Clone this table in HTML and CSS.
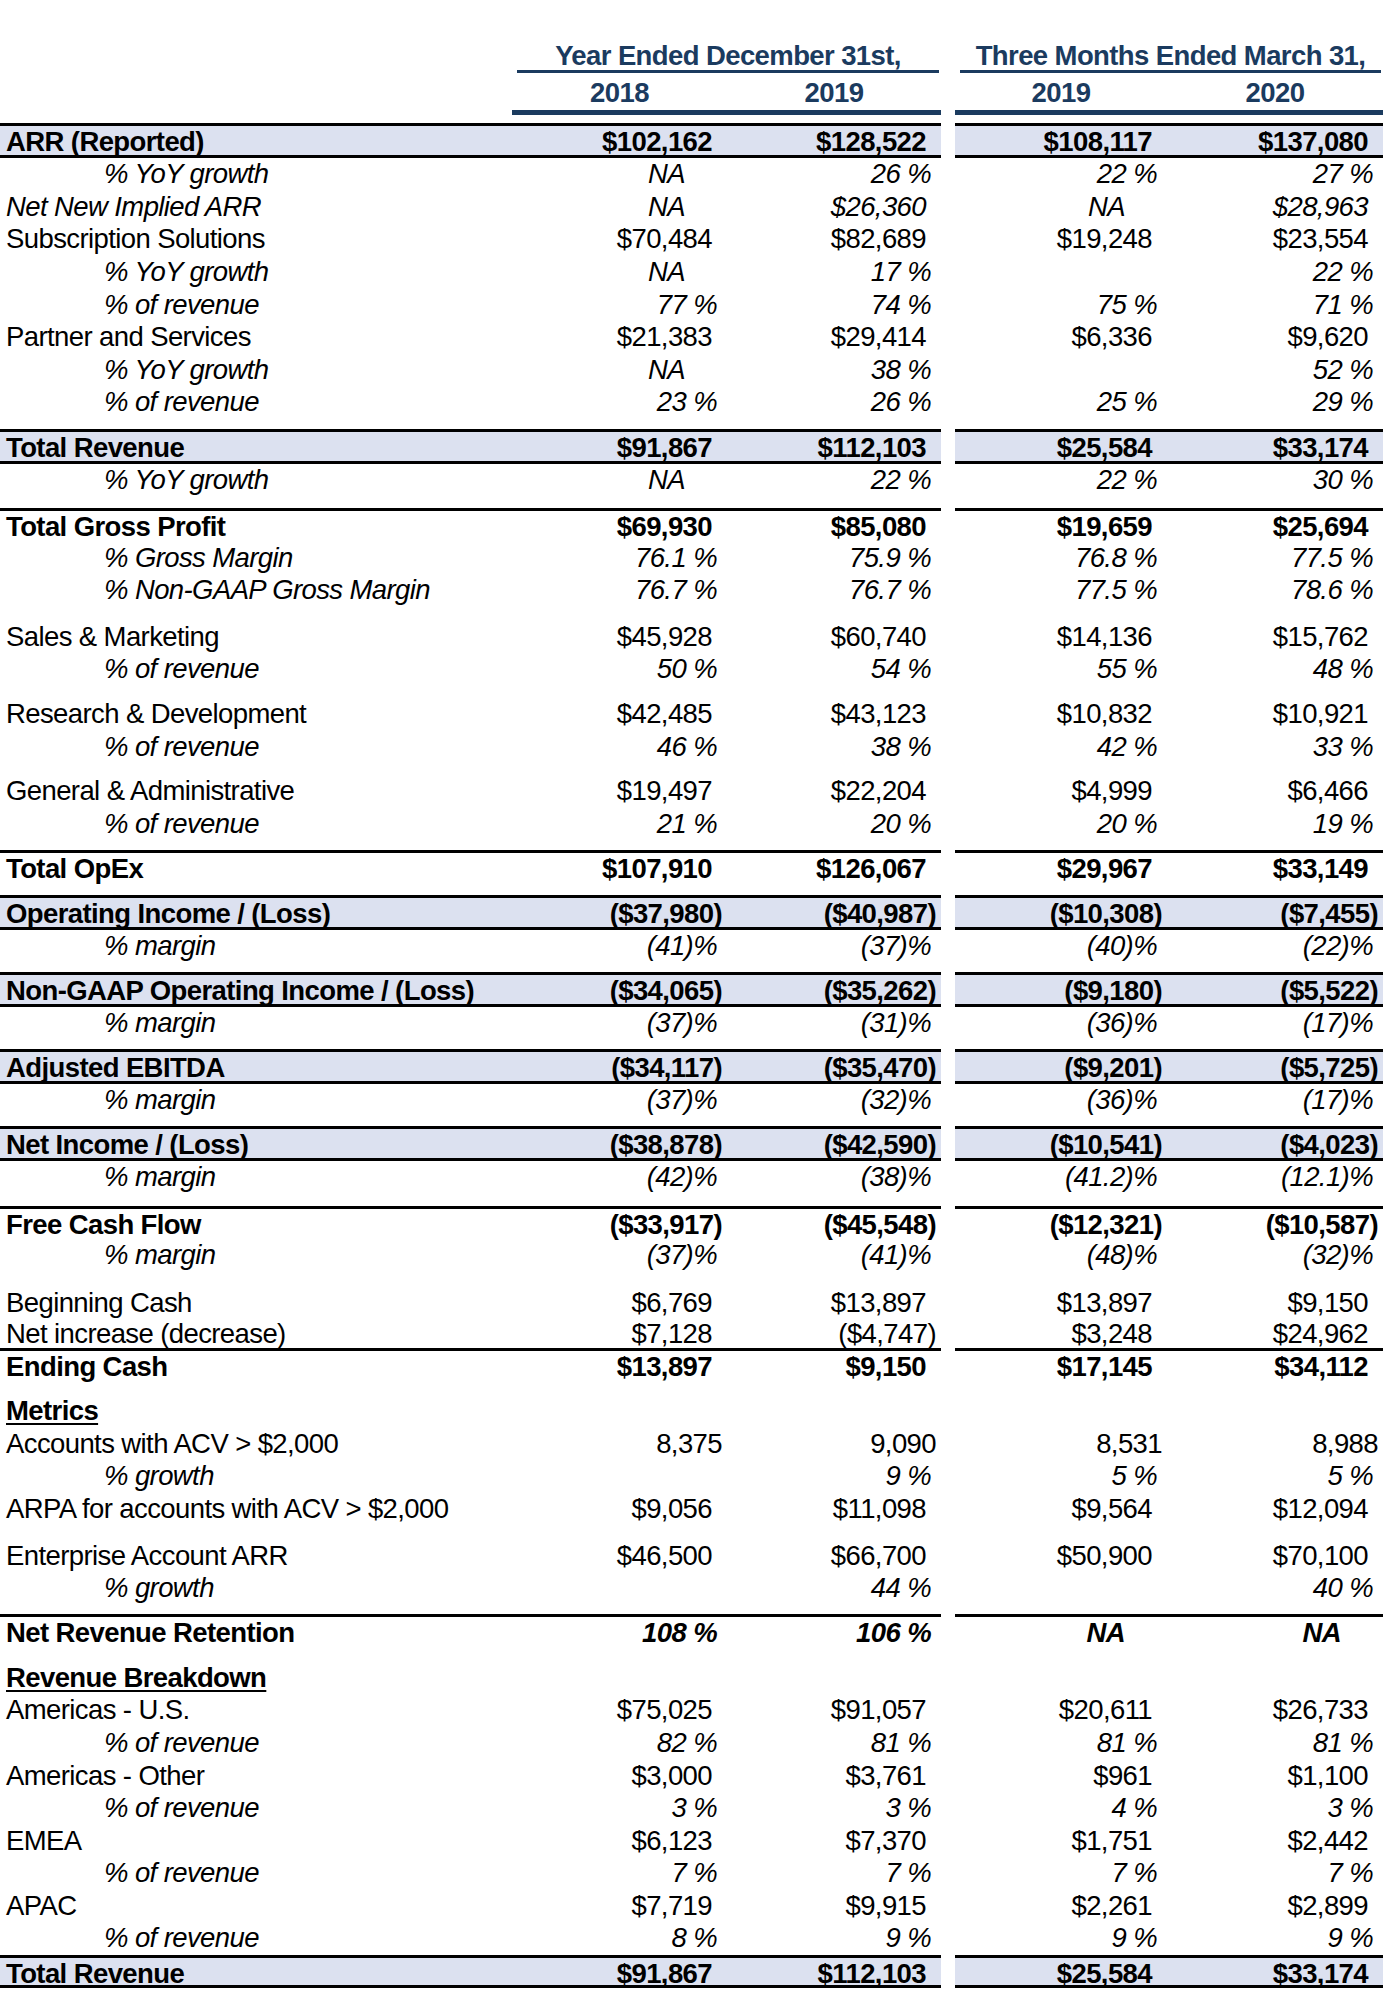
FILE: index.html
```html
<!DOCTYPE html>
<html lang="en">
<head>
    <meta charset="UTF-8">
    <meta name="viewport" content="width=device-width, initial-scale=1.0">
    <title>Financial Summary</title>
    <link rel="stylesheet" href="styles.css">
</head>
<body>

<div class="sheet">

    <!-- Column headers -->
    <div class="row head-title">
        <div class="grp g1"><div></div><div class="group-title">Year Ended December 31st,</div></div>
        <div class="grp g2"><div class="group-title">Three Months Ended March 31,</div></div>
    </div>
    <div class="row head-years">
        <div class="grp g1"><div></div><div class="year">2018</div><div class="year">2019</div></div>
        <div class="grp g2"><div class="year">2019</div><div class="year">2020</div></div>
    </div>

    <!-- ARR -->
    <div class="row band gap8">
        <div class="grp g1"><div class="lbl">ARR (Reported)</div><div class="v">$102,162</div><div class="v">$128,522</div></div>
        <div class="grp g2"><div class="v">$108,117</div><div class="v">$137,080</div></div>
    </div>
    <div class="row">
        <div class="grp g1"><div class="lbl sub">% YoY growth</div><div class="v na">NA</div><div class="v pc">26 %</div></div>
        <div class="grp g2"><div class="v pc">22 %</div><div class="v pc">27 %</div></div>
    </div>
    <div class="row it">
        <div class="grp g1"><div class="lbl">Net New Implied ARR</div><div class="v na">NA</div><div class="v">$26,360</div></div>
        <div class="grp g2"><div class="v na">NA</div><div class="v">$28,963</div></div>
    </div>
    <div class="row">
        <div class="grp g1"><div class="lbl">Subscription Solutions</div><div class="v">$70,484</div><div class="v">$82,689</div></div>
        <div class="grp g2"><div class="v">$19,248</div><div class="v">$23,554</div></div>
    </div>
    <div class="row">
        <div class="grp g1"><div class="lbl sub">% YoY growth</div><div class="v na">NA</div><div class="v pc">17 %</div></div>
        <div class="grp g2"><div class="v pc"></div><div class="v pc">22 %</div></div>
    </div>
    <div class="row">
        <div class="grp g1"><div class="lbl sub">% of revenue</div><div class="v pc">77 %</div><div class="v pc">74 %</div></div>
        <div class="grp g2"><div class="v pc">75 %</div><div class="v pc">71 %</div></div>
    </div>
    <div class="row">
        <div class="grp g1"><div class="lbl">Partner and Services</div><div class="v">$21,383</div><div class="v">$29,414</div></div>
        <div class="grp g2"><div class="v">$6,336</div><div class="v">$9,620</div></div>
    </div>
    <div class="row">
        <div class="grp g1"><div class="lbl sub">% YoY growth</div><div class="v na">NA</div><div class="v pc">38 %</div></div>
        <div class="grp g2"><div class="v pc"></div><div class="v pc">52 %</div></div>
    </div>
    <div class="row">
        <div class="grp g1"><div class="lbl sub">% of revenue</div><div class="v pc">23 %</div><div class="v pc">26 %</div></div>
        <div class="grp g2"><div class="v pc">25 %</div><div class="v pc">29 %</div></div>
    </div>

    <!-- Revenue and margins -->
    <div class="row band gap10">
        <div class="grp g1"><div class="lbl">Total Revenue</div><div class="v">$91,867</div><div class="v">$112,103</div></div>
        <div class="grp g2"><div class="v">$25,584</div><div class="v">$33,174</div></div>
    </div>
    <div class="row">
        <div class="grp g1"><div class="lbl sub">% YoY growth</div><div class="v na">NA</div><div class="v pc">22 %</div></div>
        <div class="grp g2"><div class="v pc">22 %</div><div class="v pc">30 %</div></div>
    </div>
    <div class="row rule gap12">
        <div class="grp g1"><div class="lbl">Total Gross Profit</div><div class="v">$69,930</div><div class="v">$85,080</div></div>
        <div class="grp g2"><div class="v">$19,659</div><div class="v">$25,694</div></div>
    </div>
    <div class="row">
        <div class="grp g1"><div class="lbl sub">% Gross Margin</div><div class="v pc">76.1 %</div><div class="v pc">75.9 %</div></div>
        <div class="grp g2"><div class="v pc">76.8 %</div><div class="v pc">77.5 %</div></div>
    </div>
    <div class="row">
        <div class="grp g1"><div class="lbl sub">% Non-GAAP Gross Margin</div><div class="v pc">76.7 %</div><div class="v pc">76.7 %</div></div>
        <div class="grp g2"><div class="v pc">77.5 %</div><div class="v pc">78.6 %</div></div>
    </div>

    <!-- Operating expenses -->
    <div class="row gap14">
        <div class="grp g1"><div class="lbl">Sales &amp; Marketing</div><div class="v">$45,928</div><div class="v">$60,740</div></div>
        <div class="grp g2"><div class="v">$14,136</div><div class="v">$15,762</div></div>
    </div>
    <div class="row">
        <div class="grp g1"><div class="lbl sub">% of revenue</div><div class="v pc">50 %</div><div class="v pc">54 %</div></div>
        <div class="grp g2"><div class="v pc">55 %</div><div class="v pc">48 %</div></div>
    </div>
    <div class="row gap12">
        <div class="grp g1"><div class="lbl">Research &amp; Development</div><div class="v">$42,485</div><div class="v">$43,123</div></div>
        <div class="grp g2"><div class="v">$10,832</div><div class="v">$10,921</div></div>
    </div>
    <div class="row">
        <div class="grp g1"><div class="lbl sub">% of revenue</div><div class="v pc">46 %</div><div class="v pc">38 %</div></div>
        <div class="grp g2"><div class="v pc">42 %</div><div class="v pc">33 %</div></div>
    </div>
    <div class="row gap12">
        <div class="grp g1"><div class="lbl">General &amp; Administrative</div><div class="v">$19,497</div><div class="v">$22,204</div></div>
        <div class="grp g2"><div class="v">$4,999</div><div class="v">$6,466</div></div>
    </div>
    <div class="row">
        <div class="grp g1"><div class="lbl sub">% of revenue</div><div class="v pc">21 %</div><div class="v pc">20 %</div></div>
        <div class="grp g2"><div class="v pc">20 %</div><div class="v pc">19 %</div></div>
    </div>
    <div class="row rule tall gap10">
        <div class="grp g1"><div class="lbl">Total OpEx</div><div class="v">$107,910</div><div class="v">$126,067</div></div>
        <div class="grp g2"><div class="v">$29,967</div><div class="v">$33,149</div></div>
    </div>

    <!-- Profitability -->
    <div class="row band gap10">
        <div class="grp g1"><div class="lbl">Operating Income / (Loss)</div><div class="v n">($37,980)</div><div class="v n">($40,987)</div></div>
        <div class="grp g2"><div class="v n">($10,308)</div><div class="v n">($7,455)</div></div>
    </div>
    <div class="row short">
        <div class="grp g1"><div class="lbl sub">% margin</div><div class="v pc">(41)%</div><div class="v pc">(37)%</div></div>
        <div class="grp g2"><div class="v pc">(40)%</div><div class="v pc">(22)%</div></div>
    </div>
    <div class="row band gap10">
        <div class="grp g1"><div class="lbl">Non-GAAP Operating Income / (Loss)</div><div class="v n">($34,065)</div><div class="v n">($35,262)</div></div>
        <div class="grp g2"><div class="v n">($9,180)</div><div class="v n">($5,522)</div></div>
    </div>
    <div class="row short">
        <div class="grp g1"><div class="lbl sub">% margin</div><div class="v pc">(37)%</div><div class="v pc">(31)%</div></div>
        <div class="grp g2"><div class="v pc">(36)%</div><div class="v pc">(17)%</div></div>
    </div>
    <div class="row band gap10">
        <div class="grp g1"><div class="lbl">Adjusted EBITDA</div><div class="v n">($34,117)</div><div class="v n">($35,470)</div></div>
        <div class="grp g2"><div class="v n">($9,201)</div><div class="v n">($5,725)</div></div>
    </div>
    <div class="row short">
        <div class="grp g1"><div class="lbl sub">% margin</div><div class="v pc">(37)%</div><div class="v pc">(32)%</div></div>
        <div class="grp g2"><div class="v pc">(36)%</div><div class="v pc">(17)%</div></div>
    </div>
    <div class="row band gap10">
        <div class="grp g1"><div class="lbl">Net Income / (Loss)</div><div class="v n">($38,878)</div><div class="v n">($42,590)</div></div>
        <div class="grp g2"><div class="v n">($10,541)</div><div class="v n">($4,023)</div></div>
    </div>
    <div class="row">
        <div class="grp g1"><div class="lbl sub">% margin</div><div class="v pc">(42)%</div><div class="v pc">(38)%</div></div>
        <div class="grp g2"><div class="v pc">(41.2)%</div><div class="v pc">(12.1)%</div></div>
    </div>

    <!-- Cash -->
    <div class="row rule gap12">
        <div class="grp g1"><div class="lbl">Free Cash Flow</div><div class="v n">($33,917)</div><div class="v n">($45,548)</div></div>
        <div class="grp g2"><div class="v n">($12,321)</div><div class="v n">($10,587)</div></div>
    </div>
    <div class="row">
        <div class="grp g1"><div class="lbl sub">% margin</div><div class="v pc">(37)%</div><div class="v pc">(41)%</div></div>
        <div class="grp g2"><div class="v pc">(48)%</div><div class="v pc">(32)%</div></div>
    </div>
    <div class="row cash gap16">
        <div class="grp g1"><div class="lbl">Beginning Cash</div><div class="v">$6,769</div><div class="v">$13,897</div></div>
        <div class="grp g2"><div class="v">$13,897</div><div class="v">$9,150</div></div>
    </div>
    <div class="row cash">
        <div class="grp g1"><div class="lbl">Net increase (decrease)</div><div class="v">$7,128</div><div class="v n">($4,747)</div></div>
        <div class="grp g2"><div class="v">$3,248</div><div class="v">$24,962</div></div>
    </div>
    <div class="row rule">
        <div class="grp g1"><div class="lbl">Ending Cash</div><div class="v">$13,897</div><div class="v">$9,150</div></div>
        <div class="grp g2"><div class="v">$17,145</div><div class="v">$34,112</div></div>
    </div>

    <!-- Metrics -->
    <div class="row gap14">
        <div class="grp g1"><div class="lbl section">Metrics</div></div>
    </div>
    <div class="row">
        <div class="grp g1"><div class="lbl">Accounts with ACV &gt; $2,000</div><div class="v n">8,375</div><div class="v n">9,090</div></div>
        <div class="grp g2"><div class="v n">8,531</div><div class="v n">8,988</div></div>
    </div>
    <div class="row">
        <div class="grp g1"><div class="lbl sub">% growth</div><div class="v pc"></div><div class="v pc">9 %</div></div>
        <div class="grp g2"><div class="v pc">5 %</div><div class="v pc">5 %</div></div>
    </div>
    <div class="row">
        <div class="grp g1"><div class="lbl">ARPA for accounts with ACV &gt; $2,000</div><div class="v">$9,056</div><div class="v">$11,098</div></div>
        <div class="grp g2"><div class="v">$9,564</div><div class="v">$12,094</div></div>
    </div>
    <div class="row gap14">
        <div class="grp g1"><div class="lbl">Enterprise Account ARR</div><div class="v">$46,500</div><div class="v">$66,700</div></div>
        <div class="grp g2"><div class="v">$50,900</div><div class="v">$70,100</div></div>
    </div>
    <div class="row">
        <div class="grp g1"><div class="lbl sub">% growth</div><div class="v pc"></div><div class="v pc">44 %</div></div>
        <div class="grp g2"><div class="v pc"></div><div class="v pc">40 %</div></div>
    </div>
    <div class="row rule nrr gap10">
        <div class="grp g1"><div class="lbl">Net Revenue Retention</div><div class="v pc">108 %</div><div class="v pc">106 %</div></div>
        <div class="grp g2"><div class="v na">NA</div><div class="v na">NA</div></div>
    </div>

    <!-- Revenue breakdown -->
    <div class="row gap16">
        <div class="grp g1"><div class="lbl section">Revenue Breakdown</div></div>
    </div>
    <div class="row">
        <div class="grp g1"><div class="lbl">Americas - U.S.</div><div class="v">$75,025</div><div class="v">$91,057</div></div>
        <div class="grp g2"><div class="v">$20,611</div><div class="v">$26,733</div></div>
    </div>
    <div class="row">
        <div class="grp g1"><div class="lbl sub">% of revenue</div><div class="v pc">82 %</div><div class="v pc">81 %</div></div>
        <div class="grp g2"><div class="v pc">81 %</div><div class="v pc">81 %</div></div>
    </div>
    <div class="row">
        <div class="grp g1"><div class="lbl">Americas - Other</div><div class="v">$3,000</div><div class="v">$3,761</div></div>
        <div class="grp g2"><div class="v">$961</div><div class="v">$1,100</div></div>
    </div>
    <div class="row">
        <div class="grp g1"><div class="lbl sub">% of revenue</div><div class="v pc">3 %</div><div class="v pc">3 %</div></div>
        <div class="grp g2"><div class="v pc">4 %</div><div class="v pc">3 %</div></div>
    </div>
    <div class="row">
        <div class="grp g1"><div class="lbl">EMEA</div><div class="v">$6,123</div><div class="v">$7,370</div></div>
        <div class="grp g2"><div class="v">$1,751</div><div class="v">$2,442</div></div>
    </div>
    <div class="row">
        <div class="grp g1"><div class="lbl sub">% of revenue</div><div class="v pc">7 %</div><div class="v pc">7 %</div></div>
        <div class="grp g2"><div class="v pc">7 %</div><div class="v pc">7 %</div></div>
    </div>
    <div class="row">
        <div class="grp g1"><div class="lbl">APAC</div><div class="v">$7,719</div><div class="v">$9,915</div></div>
        <div class="grp g2"><div class="v">$2,261</div><div class="v">$2,899</div></div>
    </div>
    <div class="row">
        <div class="grp g1"><div class="lbl sub">% of revenue</div><div class="v pc">8 %</div><div class="v pc">9 %</div></div>
        <div class="grp g2"><div class="v pc">9 %</div><div class="v pc">9 %</div></div>
    </div>
    <div class="row band last">
        <div class="grp g1"><div class="lbl">Total Revenue</div><div class="v">$91,867</div><div class="v">$112,103</div></div>
        <div class="grp g2"><div class="v">$25,584</div><div class="v">$33,174</div></div>
    </div>

</div>

</body>
</html>
```

FILE: styles.css
```css
/* Page */
body {
    margin: 0;
    font-family: "Liberation Sans", Arial, sans-serif;
    font-size: 27.5px;
    letter-spacing: -0.6px;
    color: #000;
    background: #fff;
}

.sheet {
    width: 1383px;
}

/* Rows: two column groups with a narrow gutter between them */
.row {
    display: flex;
    column-gap: 14px;
    height: 32.6px;
}

.grp {
    display: grid;
    align-items: center;
    box-sizing: border-box;
}

.g1 {
    grid-template-columns: 512px 215px 214px;
}

.g2 {
    grid-template-columns: 212px 216px;
}

/* Row heights and spacing */
.short { height: 32px; }
.cash  { height: 30.3px; }
.gap8  { margin-top: 8px; }
.gap10 { margin-top: 10px; }
.gap12 { margin-top: 12px; }
.gap14 { margin-top: 14px; }
.gap16 { margin-top: 16px; }

/* Header */
.head-title {
    height: 75px;
}

.group-title {
    grid-column: span 2;
    align-self: end;
    margin: 0 2px 2px 5px;
    line-height: 28px;
    border-bottom: 3px solid #1b3b5f;
    color: #1b3b5f;
    font-weight: bold;
    text-align: center;
}

.head-years {
    height: 40px;
}

.head-years .grp {
    align-items: stretch;
}

.year {
    display: flex;
    align-items: center;
    justify-content: center;
    border-bottom: 5px solid #1b3b5f;
    color: #1b3b5f;
    font-weight: bold;
}

/* Shaded total rows */
.band {
    height: 35px;
    font-weight: bold;
}

.band .grp {
    background: #dce1f0;
    border-top: 3px solid #000;
    border-bottom: 3px solid #000;
}

.band.last {
    height: 33px;
}

/* Subtotal rows with a rule above */
.rule {
    height: 33px;
    font-weight: bold;
}

.rule .grp {
    border-top: 3px solid #000;
}

.rule.tall {
    height: 35px;
}

.nrr {
    height: 31px;
}

.nrr .v {
    font-style: italic;
}

/* Cells */
.lbl {
    padding-left: 6px;
    white-space: nowrap;
}

.sub {
    padding-left: 104px;
    font-style: italic;
}

.section {
    font-weight: bold;
    text-decoration: underline;
    text-decoration-thickness: 2px;
    text-underline-offset: 3px;
}

.it {
    font-style: italic;
}

.v {
    text-align: right;
    padding-right: 15px;
    white-space: nowrap;
}

.v.n  { padding-right: 5px; }
.v.pc { padding-right: 10px; font-style: italic; }
.v.na { padding-right: 42px; font-style: italic; }
```
